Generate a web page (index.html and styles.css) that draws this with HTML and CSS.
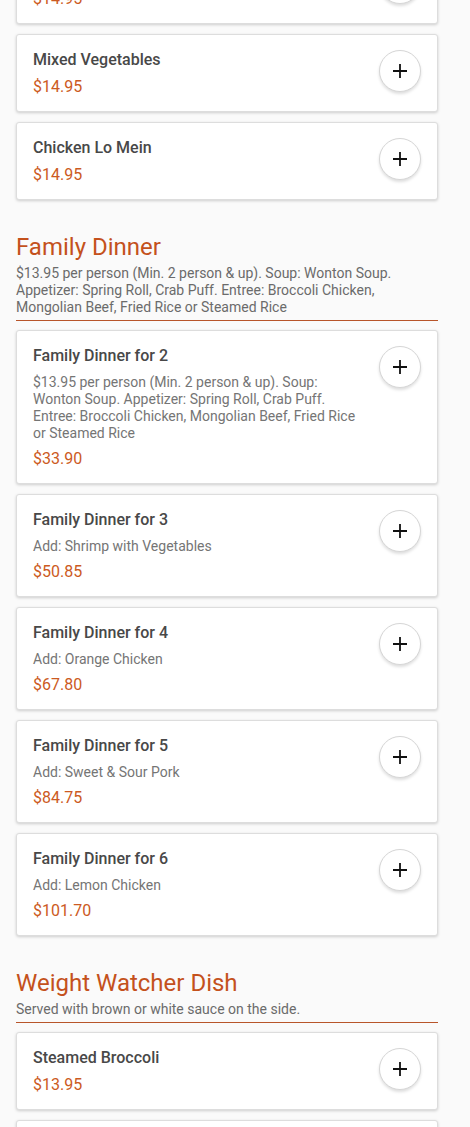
FILE: index.html
```html
<!DOCTYPE html>
<html lang="en">
<head>
    <meta charset="UTF-8">
    <meta name="viewport" content="width=device-width, initial-scale=1.0">
    <title>Menu</title>
    <link rel="stylesheet" href="styles.css">
</head>
<body>

<div class="menu">
    <!-- tail of the previous section, scrolled mostly out of view -->
    <div class="item-list">
        <div class="item">
            <div class="item-info">
                <div class="item-title">Broccoli Beef</div>
                <div class="item-price">$14.95</div>
            </div>
            <button class="add-btn" aria-label="Add"><svg viewBox="0 0 16 16"><path d="M8 1v14M1 8h14"/></svg></button>
        </div>
        <div class="item">
            <div class="item-info">
                <div class="item-title">Mixed Vegetables</div>
                <div class="item-price">$14.95</div>
            </div>
            <button class="add-btn" aria-label="Add"><svg viewBox="0 0 16 16"><path d="M8 1v14M1 8h14"/></svg></button>
        </div>
        <div class="item">
            <div class="item-info">
                <div class="item-title">Chicken Lo Mein</div>
                <div class="item-price">$14.95</div>
            </div>
            <button class="add-btn" aria-label="Add"><svg viewBox="0 0 16 16"><path d="M8 1v14M1 8h14"/></svg></button>
        </div>
    </div>

    <div class="section">
        <div class="section-head">
            <h2>Family Dinner</h2>
            <p>$13.95 per person (Min. 2 person &amp; up). Soup: Wonton Soup. Appetizer: Spring Roll, Crab Puff. Entree: Broccoli Chicken, Mongolian Beef, Fried Rice or Steamed Rice</p>
        </div>
        <div class="item-list">
            <div class="item">
                <div class="item-info">
                    <div class="item-title">Family Dinner for 2</div>
                    <div class="item-desc">$13.95 per person (Min. 2 person &amp; up). Soup: Wonton Soup. Appetizer: Spring Roll, Crab Puff. Entree: Broccoli Chicken, Mongolian Beef, Fried Rice or Steamed Rice</div>
                    <div class="item-price">$33.90</div>
                </div>
                <button class="add-btn" aria-label="Add"><svg viewBox="0 0 16 16"><path d="M8 1v14M1 8h14"/></svg></button>
            </div>
            <div class="item">
                <div class="item-info">
                    <div class="item-title">Family Dinner for 3</div>
                    <div class="item-desc">Add: Shrimp with Vegetables</div>
                    <div class="item-price">$50.85</div>
                </div>
                <button class="add-btn" aria-label="Add"><svg viewBox="0 0 16 16"><path d="M8 1v14M1 8h14"/></svg></button>
            </div>
            <div class="item">
                <div class="item-info">
                    <div class="item-title">Family Dinner for 4</div>
                    <div class="item-desc">Add: Orange Chicken</div>
                    <div class="item-price">$67.80</div>
                </div>
                <button class="add-btn" aria-label="Add"><svg viewBox="0 0 16 16"><path d="M8 1v14M1 8h14"/></svg></button>
            </div>
            <div class="item">
                <div class="item-info">
                    <div class="item-title">Family Dinner for 5</div>
                    <div class="item-desc">Add: Sweet &amp; Sour Pork</div>
                    <div class="item-price">$84.75</div>
                </div>
                <button class="add-btn" aria-label="Add"><svg viewBox="0 0 16 16"><path d="M8 1v14M1 8h14"/></svg></button>
            </div>
            <div class="item">
                <div class="item-info">
                    <div class="item-title">Family Dinner for 6</div>
                    <div class="item-desc">Add: Lemon Chicken</div>
                    <div class="item-price">$101.70</div>
                </div>
                <button class="add-btn" aria-label="Add"><svg viewBox="0 0 16 16"><path d="M8 1v14M1 8h14"/></svg></button>
            </div>
        </div>
    </div>

    <div class="section">
        <div class="section-head">
            <h2>Weight Watcher Dish</h2>
            <p>Served with brown or white sauce on the side.</p>
        </div>
        <div class="item-list">
            <div class="item">
                <div class="item-info">
                    <div class="item-title">Steamed Broccoli</div>
                    <div class="item-price">$13.95</div>
                </div>
                <button class="add-btn" aria-label="Add"><svg viewBox="0 0 16 16"><path d="M8 1v14M1 8h14"/></svg></button>
            </div>
            <div class="item">
                <div class="item-info">
                    <div class="item-title">Steamed Mixed Vegetables</div>
                    <div class="item-price">$13.95</div>
                </div>
                <button class="add-btn" aria-label="Add"><svg viewBox="0 0 16 16"><path d="M8 1v14M1 8h14"/></svg></button>
            </div>
        </div>
    </div>
</div>

</body>
</html>
```

FILE: styles.css
```css
body {
    margin: 0;
    background-color: #fafafa;
    font-family: Roboto, "Noto Sans", Arial, sans-serif;
    color: #444;
    overflow: hidden;
}
.menu {
    margin: -54px 32px 0 16px;
}
.item-list {
    display: flex;
    flex-direction: column;
    gap: 10px;
}
.section {
    margin-top: 33px;
}
.section-head {
    border-bottom: 1px solid #b8552a;
    padding-bottom: 4px;
    margin-bottom: 9px;
}
.section-head h2 {
    margin: 0 0 4px;
    font-size: 24px;
    line-height: 28px;
    font-weight: 400;
    color: #c4511c;
}
.section-head p {
    margin: 0;
    font-size: 14px;
    line-height: 17px;
    color: #6b6b6b;
}
.item {
    display: flex;
    align-items: flex-start;
    padding: 13px 16px 12px 16px;
    background-color: #fff;
    border: 1px solid #ddd;
    border-radius: 3px;
    box-shadow: 0 1px 3px rgba(0, 0, 0, 0.18);
}
.item-info {
    flex: 1;
    min-width: 0;
}
.item-title {
    font-size: 16px;
    line-height: 24px;
    font-weight: 500;
    color: #484848;
}
.item-desc {
    margin: 6px 0 5px;
    font-size: 14px;
    line-height: 17px;
    color: #757575;
}
.item-price {
    margin-top: 3px;
    font-size: 16px;
    line-height: 24px;
    color: #cc5a22;
}
.item-desc + .item-price {
    margin-top: 0;
}
.add-btn {
    flex: none;
    width: 42px;
    height: 42px;
    margin: 2px 0 0 16px;
    padding: 0;
    display: flex;
    align-items: center;
    justify-content: center;
    background-color: #fff;
    border: 1px solid #d6d6d6;
    border-radius: 50%;
    box-shadow: 0 2px 3px rgba(0, 0, 0, 0.13);
    cursor: pointer;
}
.add-btn svg {
    width: 16px;
    height: 16px;
    stroke: #111;
    stroke-width: 1.8;
    fill: none;
}
```
